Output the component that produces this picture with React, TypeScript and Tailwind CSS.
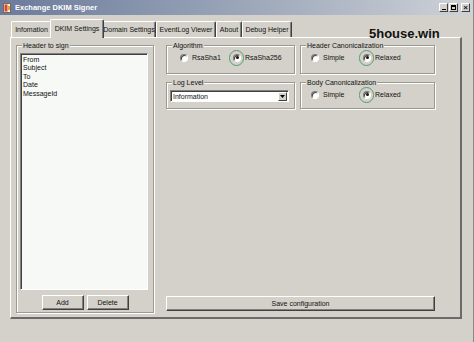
import React from "react";

const F = "font-['Liberation_Sans',Arial,sans-serif]";

function Radio({ checked, ring }: { checked?: boolean; ring?: boolean }) {
  return (
    <span className="relative flex h-[8px] w-[8px] shrink-0 items-center justify-center">
      <span className="flex h-[8px] w-[8px] items-center justify-center rounded-full border border-t-[#7d7b75] border-l-[#7d7b75] border-r-[#ffffff] border-b-[#ffffff] bg-white shadow-[inset_1px_1px_0_#404040]">
        {checked && <span className="h-[3px] w-[3px] rounded-full bg-[#1a1010]" />}
      </span>
      {ring && (
        <span className="absolute left-[-4px] top-[-4px] h-[16px] w-[15px] rounded-full border-[1.5px] border-[#4fa070]" />
      )}
    </span>
  );
}

function RadioItem({ label, checked, ring, w }: { label: string; checked?: boolean; ring?: boolean; w?: string }) {
  return (
    <div className={`flex items-center gap-[4px] ${w ?? ""}`}>
      <Radio checked={checked} ring={ring} />
      <span>{label}</span>
    </div>
  );
}

function Group({ title, className, children }: { title: string; className?: string; children: React.ReactNode }) {
  return (
    <fieldset className={`border border-[#9c9990] shadow-[inset_1px_1px_0_#ffffff,1px_1px_0_#ffffff] ${className ?? ""}`}>
      <legend className="ml-[5px] bg-[#d4d1ca] px-[1px] leading-[9px]">{title}</legend>
      {children}
    </fieldset>
  );
}

function Button({ label, className }: { label: string; className?: string }) {
  return (
    <div
      className={`flex h-[15px] items-center justify-center border border-t-white border-l-white border-r-[#404040] border-b-[#404040] bg-[#d4d1ca] shadow-[inset_-1px_-1px_0_#808080] ${className ?? ""}`}
    >
      {label}
    </div>
  );
}

function Tab({ label, w, selected }: { label: string; w: string; selected?: boolean }) {
  if (selected) {
    return (
      <div
        className={`relative z-10 -mx-[2px] mb-[-1px] flex h-[19px] items-start justify-center rounded-t-[2px] border-l border-t border-l-white border-t-white border-r border-r-[#404040] bg-[#d4d1ca] pt-[4px] shadow-[inset_-1px_0_0_#808080] ${w}`}
      >
        {label}
      </div>
    );
  }
  return (
    <div
      className={`flex h-[16px] items-center justify-center rounded-t-[2px] border-l border-t border-l-white border-t-white border-r border-r-[#404040] shadow-[inset_-1px_0_0_#808080] ${w}`}
    >
      {label}
    </div>
  );
}

export default function App() {
  return (
    <div className={`${F} relative flex h-[342px] w-[474px] flex-col overflow-hidden border-r border-r-[#8a8883] bg-[#d4d1ca] text-[7px] leading-[9px] text-[#111]`}>
      {/* title bar */}
      <div className="flex h-[15px] shrink-0 items-center bg-gradient-to-r from-[#6c7b9c] via-[#9aa5b8] to-[#cfd2d8] pl-[3px] pr-[3px]">
        <svg width="9" height="10" viewBox="0 0 9 10" className="shrink-0">
          <rect x="0.5" y="0.5" width="7" height="9" fill="#f4f0e8" stroke="#7a6a50" strokeWidth="1" />
          <rect x="1.5" y="1.5" width="3" height="7" fill="#d9452b" />
          <rect x="5" y="3" width="2" height="4" fill="#f0a030" />
        </svg>
        <span className="ml-[3px] text-[7.5px] font-bold text-white">Exchange DKIM Signer</span>
        <div className="ml-auto flex gap-[1px]">
          <div className="flex h-[9px] w-[9px] items-end justify-center border border-t-white border-l-white border-r-[#404040] border-b-[#404040] bg-[#d4d1ca] pb-[1px]">
            <span className="h-[1px] w-[4px] bg-black" />
          </div>
          <div className="flex h-[9px] w-[9px] items-center justify-center border border-t-white border-l-white border-r-[#404040] border-b-[#404040] bg-[#d4d1ca]">
            <span className="h-[5px] w-[5px] border border-t-2 border-black" />
          </div>
          <div className="ml-[2px] flex h-[9px] w-[9px] items-center justify-center border border-t-white border-l-white border-r-[#404040] border-b-[#404040] bg-[#d4d1ca] text-[8px] font-bold leading-[7px]">
            ×
          </div>
        </div>
      </div>

      {/* tabs + panel */}
      <div className="flex flex-col pl-[10px] pr-[11px] pt-[4px]">
        <div className="flex h-[18px] items-end pl-[1px]">
          <Tab label="Infomation" w="w-[41px]" />
          <Tab label="DKIM Settings" w="w-[54px]" selected />
          <Tab label="Domain Settings" w="w-[54px]" />
          <Tab label="EventLog Viewer" w="w-[60px]" />
          <Tab label="About" w="w-[26px]" />
          <Tab label="Debug Helper" w="w-[50px]" />
        </div>
        <div className="flex h-[282px] border-l border-t border-l-white border-t-white border-r-2 border-b-2 border-r-[#6a6a6a] border-b-[#6a6a6a] pl-[5px] pt-[3px]">
          {/* left group */}
          <Group title="Header to sign" className="flex h-[272px] w-[138px] flex-col">
            <div className="flex flex-col px-[3px] pt-[3px]">
              <div className="h-[237px] w-[128px] border border-t-[#808080] border-l-[#808080] border-r-white border-b-white bg-[#f6f9f5] pl-[2px] pt-[2px] shadow-[inset_1px_1px_0_#404040] leading-[8.4px]">
                <div>From</div>
                <div>Subject</div>
                <div>To</div>
                <div>Date</div>
                <div>MessageId</div>
              </div>
              <div className="mt-[5px] flex justify-center gap-[3px]">
                <Button label="Add" className="w-[42px]" />
                <Button label="Delete" className="w-[42px]" />
              </div>
            </div>
          </Group>

          {/* right column */}
          <div className="ml-[12px] flex w-[269px] flex-col">
            <div className="flex gap-[5px]">
              <Group title="Algorithm" className="h-[33px] w-[129px]">
                <div className="flex items-center pl-[13px] pt-[3px]">
                  <RadioItem label="RsaSha1" w="w-[53px]" />
                  <RadioItem label="RsaSha256" checked ring />
                </div>
              </Group>
              <Group title="Header Canonicalization" className="h-[33px] w-[135px]">
                <div className="flex items-center pl-[10px] pt-[3px]">
                  <RadioItem label="Simple" w="w-[52px]" />
                  <RadioItem label="Relaxed" checked ring />
                </div>
              </Group>
            </div>
            <div className="mt-[4px] flex gap-[5px]">
              <Group title="Log Level" className="h-[31px] w-[129px]">
                <div className="pl-[3px] pt-[3px]">
                  <div className="flex h-[12px] w-[119px] items-center border border-t-[#808080] border-l-[#808080] border-r-white border-b-white bg-white shadow-[inset_1px_1px_0_#404040]">
                    <span className="flex-1 pl-[2px]">Information</span>
                    <div className="mr-[1px] flex h-[9px] w-[9px] items-center justify-center border border-t-white border-l-white border-r-[#404040] border-b-[#404040] bg-[#d4d1ca]">
                      <svg width="5" height="3" viewBox="0 0 5 3">
                        <path d="M0 0 H5 L2.5 3 Z" fill="#000" />
                      </svg>
                    </div>
                  </div>
                </div>
              </Group>
              <Group title="Body Canonicalization" className="h-[31px] w-[135px]">
                <div className="flex items-center pl-[10px] pt-[3px]">
                  <RadioItem label="Simple" w="w-[52px]" />
                  <RadioItem label="Relaxed" checked ring />
                </div>
              </Group>
            </div>
            <Button label="Save configuration" className="mt-auto mb-[6px] w-[269px]" />
          </div>
        </div>
      </div>

      {/* watermark */}
      <div className="absolute left-[369px] top-[27px] text-[13px] font-bold leading-[14px] text-[#111]">5house.win</div>
    </div>
  );
}
